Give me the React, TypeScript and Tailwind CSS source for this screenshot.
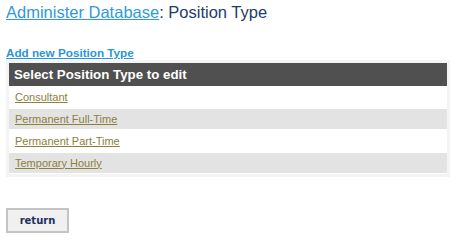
import React from "react";

const rows = [
  { label: "Consultant", shaded: false },
  { label: "Permanent Full-Time", shaded: true },
  { label: "Permanent Part-Time", shaded: false },
  { label: "Temporary Hourly", shaded: true },
];

export default function App() {
  return (
    <div
      className="w-[458px] h-[240px] bg-white px-[6px] overflow-hidden"
      style={{ fontFamily: '"Liberation Sans", Arial, sans-serif' }}
    >
      <h1 className="pt-[2px] text-[16.5px] leading-[20px] font-normal text-[#1d3c6b]">
        <a href="#" className="text-[#2f9ad8] underline">
          Administer Database
        </a>
        : Position Type
      </h1>

      <div className="mt-[24px] text-[11.7px] leading-[14px] font-bold">
        <a href="#" className="text-[#2a96d6] underline">
          Add new Position Type
        </a>
      </div>

      <div className="w-[444px] bg-[#f4f4f4] p-[3px]">
        <div className="h-[23px] bg-[#505050] pl-[5px] flex items-center text-white font-bold text-[13.3px]">
          Select Position Type to edit
        </div>
        <div className="bg-white flex flex-col gap-[2px] py-[1px]">
          {rows.map((r) => (
            <div
              key={r.label}
              className={`h-[20px] pl-[6px] flex items-center text-[11px] ${
                r.shaded ? "bg-[#e3e3e3]" : "bg-white"
              }`}
            >
              <a href="#" className="text-[#8b7f3c] underline">
                {r.label}
              </a>
            </div>
          ))}
        </div>
      </div>

      <div className="mt-[31px]">
        <button
          className="w-[63px] h-[25px] border-2 border-[#c4c4c4] bg-[#f0f0f0] text-[10px] font-bold text-[#1a2f5a] flex items-center justify-center"
          style={{ fontFamily: '"DejaVu Sans", Verdana, sans-serif' }}
        >
          return
        </button>
      </div>
    </div>
  );
}
